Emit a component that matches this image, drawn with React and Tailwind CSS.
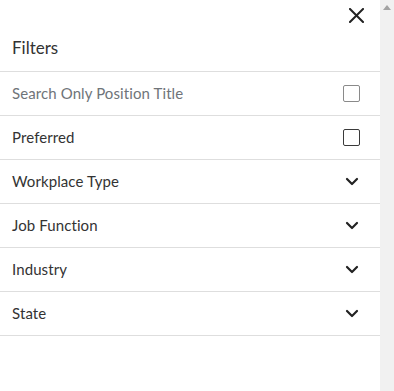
import React from "react";

function Chevron() {
  return (
    <svg width="14" height="9" viewBox="0 0 14 9" fill="none">
      <path d="M2 2 L7 7 L12 2" stroke="#222" strokeWidth="2.2" strokeLinecap="round" strokeLinejoin="round" />
    </svg>
  );
}

function Box({ dark }) {
  return (
    <div
      className={
        "w-[17px] h-[17px] rounded-[2px] border bg-white " +
        (dark ? "border-[#3a3a3a]" : "border-[#8a8a8a]")
      }
    />
  );
}

export default function App() {
  const rows = [
    { label: "Search Only Position Title", kind: "box", muted: true },
    { label: "Preferred", kind: "boxdark" },
    { label: "Workplace Type", kind: "chev" },
    { label: "Job Function", kind: "chev" },
    { label: "Industry", kind: "chev" },
    { label: "State", kind: "chev" },
  ];
  return (
    <div className="flex h-[391px] w-[394px] bg-white" style={{ fontFamily: "Lato, 'Open Sans', sans-serif" }}>
      <div className="w-[380px] flex flex-col">
        <div className="h-[71px] flex flex-col">
          <div className="flex justify-end pt-[8px] pr-[16px]">
            <svg width="15" height="15" viewBox="0 0 15 15" fill="none">
              <path d="M1 1 L14 14 M14 1 L1 14" stroke="#222" strokeWidth="2" strokeLinecap="square" />
            </svg>
          </div>
          <div className="mt-[13px] pl-[12px] text-[17px] leading-[24px] text-[#333]">Filters</div>
        </div>
        {rows.map((r) => (
          <div key={r.label} className="h-[44px] border-t border-[#dedede] flex items-center justify-between pl-[12px] pr-[20px]">
            <span className={"text-[15px] tracking-[0.1px] " + (r.muted ? "text-[#6f7479]" : "text-[#333]")}>{r.label}</span>
            {r.kind === "chev" ? (
              <div className="w-[17px] flex justify-center"><Chevron /></div>
            ) : (
              <Box dark={r.kind === "boxdark"} />
            )}
          </div>
        ))}
        <div className="border-t border-[#dedede]" />
      </div>
      <div className="w-[14px] bg-[#f1f1f1] flex justify-center pt-[5px]">
        <svg width="8" height="5" viewBox="0 0 8 5">
          <path d="M0 5 L4 0 L8 5 Z" fill="#a3a3a3" />
        </svg>
      </div>
    </div>
  );
}
